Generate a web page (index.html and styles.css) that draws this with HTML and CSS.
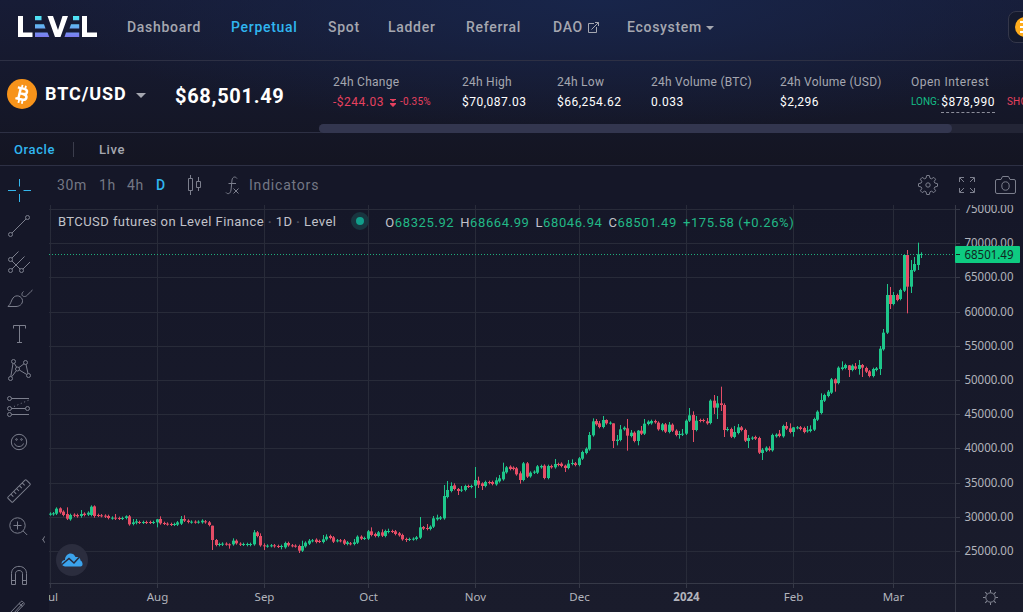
FILE: index.html
```html
<!DOCTYPE html>
<html lang="en">

<head>
  <meta charset="UTF-8">
  <meta name="viewport" content="width=device-width, initial-scale=1.0">
  <title>BTC/USD - Level Finance</title>
  <link rel="stylesheet" href="styles.css">
</head>

<body>
  <header class="top-nav">
    <svg class="logo" width="80" height="22" viewBox="0 0 80 22">
      <defs>
        <linearGradient id="bars" x1="0" y1="0" x2="0" y2="22" gradientUnits="userSpaceOnUse">
          <stop offset="0" stop-color="#4deaf5"/>
          <stop offset="1" stop-color="#7f72ee"/>
        </linearGradient>
      </defs>
      <path fill="#fff" d="M1 0h5v16.500h9.500V21H1zM30.500 0h5.500l5 14 4.500-14H51l-7.500 21h-5.500zM65 0h5v16.500h10V21H65z"/>
      <path fill="url(#bars)" d="M18 0h6.500v4.200H18zM18 8.200h9l1.500 4.300H18zM18 16.500h12.500l1.800 4.500H18zM56 0h6.200v4.200H56zM54 8.200h8.200v4.300h-9.700zM49 16.500h13.200V21H47.500z"/>
    </svg>
    <nav>
      <a class="n-dash">Dashboard</a>
      <a class="n-perp active">Perpetual</a>
      <a class="n-spot">Spot</a>
      <a class="n-ladder">Ladder</a>
      <a class="n-ref">Referral</a>
      <a class="n-dao">DAO
        <svg width="11" height="11" viewBox="0 0 11 11"><path d="M6 1.500H.5v9h8V5M3.500 7.500l7-7M7 .5h3.500V4"/></svg>
      </a>
      <a class="n-eco">Ecosystem <i class="caret"></i></a>
    </nav>
    <div class="chain">
      <svg width="20" height="20" viewBox="0 0 20 20"><circle cx="10" cy="10" r="10" fill="#ffac1c"/><path d="M5 5h10M5 10h10M5 15h10" stroke="#fff" stroke-width="2"/></svg>
    </div>
  </header>

  <section class="pair-bar">
    <div class="pair">
      <svg width="30" height="30" viewBox="0 0 30 30">
        <circle cx="15" cy="15" r="15" fill="#f7931a"/>
        <g transform="rotate(13 15 15)" fill="none" stroke="#fff" stroke-width="2.500">
          <path d="M9.500 9.500H16c4.500 0 4.500 5.200 0 5.200h-3.500M12.500 9.500v11M16 14.700c5.500 0 5.500 5.800 0 5.800H9.500"/>
          <path d="M13.500 6V9M17 6V9M13.500 21v3.500M17 21v3.500" stroke-width="1.800"/>
        </g>
      </svg>
      <span class="pair-name">BTC/USD</span>
      <i class="caret big"></i>
    </div>
    <div class="price">$68,501.49</div>
    <div class="stats-wrap">
      <div class="stats">
        <dl class="s-change"><dt>24h Change</dt><dd class="down">-$244.03
          <svg width="6" height="8" viewBox="0 0 6 8"><path fill="#e5415f" d="M0 0h6v1H5L3 3 1 1H0zM0 4h6v1L3 8 0 5z"/></svg>
          <small>-0.35%</small></dd></dl>
        <dl class="s-high"><dt>24h High</dt><dd>$70,087.03</dd></dl>
        <dl class="s-low"><dt>24h Low</dt><dd>$66,254.62</dd></dl>
        <dl class="s-vbtc"><dt>24h Volume (BTC)</dt><dd>0.033</dd></dl>
        <dl class="s-vusd"><dt>24h Volume (USD)</dt><dd>$2,296</dd></dl>
        <dl class="s-oi"><dt>Open Interest</dt><dd><small class="up">LONG:</small><u>$878,990</u><small class="down short">SHORT:</small></dd></dl>
      </div>
      <div class="scrollbar"><div class="thumb"></div></div>
    </div>
  </section>

  <div class="tabs">
    <span class="tab active">Oracle</span>
    <span class="tab">Live</span>
  </div>

  <main class="chart">
    <aside class="tools">
      <svg class="on" viewBox="0 0 28 28"><path d="M14.500 3v7.500M14.500 18v8M3 14.500h8M18.500 14.500H26"/></svg>
      <svg viewBox="0 0 28 28"><circle cx="5.500" cy="22.500" r="2"/><circle cx="22.500" cy="5.500" r="2"/><path d="M7 21 21 7"/></svg>
      <svg viewBox="0 0 28 28"><circle cx="5.500" cy="11.500" r="2"/><circle cx="5.500" cy="22.500" r="2"/><circle cx="16.500" cy="22.500" r="2"/><path d="M7 10l6.500-6.500M7 21 19.500 8.500M18 21l7-7M7 13l8 8"/></svg>
      <svg viewBox="0 0 28 28"><path d="M3 22.500c3-2.500 3-6 5-8.500 3-4 9-2 9.500 2.500.2 4-3.500 6-6.500 6zM18.500 7.500c-2.500 2-2 5 1 5 2.500 0 3-2 8-6.500"/></svg>
      <svg viewBox="0 0 28 28"><path d="M8.500 8.500v-3h12v3M14.500 5.500v17M12 22.500h5"/></svg>
      <svg viewBox="0 0 28 28"><circle cx="8.500" cy="5.500" r="2"/><circle cx="20.500" cy="6.500" r="2"/><circle cx="12.500" cy="13" r="2"/><circle cx="23.500" cy="19.500" r="2"/><circle cx="5.500" cy="22.500" r="2"/><path d="M5.800 20.500 8 7.500M9.300 7.300l2.400 4M14 11.500l5-3.700M21 8.500l2 9M14.300 14l7.500 4.500M11.200 14.800l-4.500 6"/></svg>
      <svg viewBox="0 0 28 28"><circle cx="4.500" cy="6.500" r="2"/><circle cx="4.500" cy="16.500" r="2"/><circle cx="22.500" cy="16.500" r="2"/><circle cx="4.500" cy="22.500" r="2"/><path d="M6.500 6.500H24M6.500 16.500h14M6.500 22.500H24"/><path d="M9 14.500 24 8" stroke-dasharray="1 2.700"/></svg>
      <svg viewBox="0 0 28 28"><circle cx="14" cy="14" r="7.700"/><circle cx="11.500" cy="11.500" r=".8"/><circle cx="16.500" cy="11.500" r=".8"/><path d="M9.500 15.500c1 4 8 4 9 0"/></svg>
      <svg class="gap-l" viewBox="0 0 28 28"><g transform="rotate(-45 14 15)"><rect x="1" y="11.500" width="26" height="7" rx="1"/><path d="M6 11.500V15M10 11.500V15M14 11.500V15M18 11.500V15M22 11.500V15"/></g></svg>
      <svg viewBox="0 0 28 28"><circle cx="12.500" cy="13.500" r="7.700"/><path d="M18.200 19l4 4M8.500 13.500h8M12.500 9.500v8"/></svg>
      <svg class="gap-xl" viewBox="0 0 28 28"><path d="M6.500 22.500v-11c0-9.500 15-9.500 15 0v11h-4v-11c0-4-7-4-7 0v11zM6.500 18.500h4M17.500 18.500h4"/></svg>
      <svg class="pull" viewBox="0 0 28 28"><path d="M5 19 16 7.500c1-1 4 1.500 3 3L8 22zM8 20 18 9M14 9.500l3.500 3M2 23l3-4"/></svg>
      <span class="collapse"></span>
    </aside>

    <div class="panel">
      <div class="chart-top">
        <span class="iv i30">30m</span>
        <span class="iv i1">1h</span>
        <span class="iv i4">4h</span>
        <span class="iv iD active">D</span>
        <svg class="ic-candle" width="15" height="20" viewBox="0 0 15 20"><path d="M3.500 0v3M3.500 16v4M1.500 3.500h4v12h-4zM11.500 2v4M11.500 13v3M9.500 6.500h4v6h-4z"/></svg>
        <svg class="ic-fx" width="15" height="19" viewBox="0 0 15 19"><path d="M12 2.500C10.500.2 7.500.5 7 4L6 14c-.5 4-3.500 4.500-5 2.500M3.500 7.500H11M8.500 12.500l5 5M13.500 12.500l-5 5"/></svg>
        <span class="iv ind">Indicators</span>
        <svg class="ic-gear" width="20" height="20" viewBox="0 0 20 20"><circle cx="10" cy="10" r="2.200"/><path d="M8 3.200 8.700.5h2.600l.7 2.700 1.500.6 2.300-1.400 1.800 1.800-1.400 2.300.6 1.500 2.700.7v2.600l-2.700.7-.6 1.500 1.400 2.300-1.800 1.800-2.300-1.400-1.500.6-.7 2.700H8.700L8 16.800l-1.500-.6-2.300 1.400-1.800-1.800 1.400-2.300-.6-1.500-2.700-.7V8.700L3.200 8l.6-1.500-1.400-2.300 1.800-1.800 2.300 1.400z"/></svg>
        <svg class="ic-full" width="16" height="16" viewBox="0 0 16 16"><path d="M.5 5V.5H5M11 .5h4.500V5M15.500 11v4.500H11M5 15.500H.5V11M1 1l4 4M15 1l-4 4M15 15l-4-4M1 15l4-4"/></svg>
        <svg class="ic-cam" width="21" height="18" viewBox="0 0 21 18"><path d="M2 3.500h4l1.500-3h6l1.500 3h4q1.500 0 1.500 1.500v11q0 1.500-1.500 1.500H2Q.5 17.500.5 16V5Q.5 3.500 2 3.500z"/><ellipse cx="10.500" cy="10" rx="3.700" ry="4.200"/></svg>
      </div>

      <div class="plot">
        <svg id="plot" width="974" height="407" viewBox="49 205 974 407"></svg>
        <div class="legend">
          <span class="sym">BTCUSD futures on Level Finance <b>·</b> 1D <b>·</b> Level</span>
          <span class="live"></span>
          <span class="ohlc"><span>O<em>68325.92</em></span><span>H<em>68664.99</em></span><span>L<em>68046.94</em></span><span>C<em>68501.49</em></span><em>+175.58 (+0.26%)</em></span>
        </div>
        <div class="tv">
          <svg width="22" height="14" viewBox="0 0 22 14"><path fill="#3ba3ec" d="M4 13.500C-1 13 0 7 4 7 4 0 12-2 14.500 4c4-.5 5 2 5 3.500 2.500 1 3 6 0 6z"/><path fill="none" stroke="#262a3c" stroke-width="1.500" d="M1 11.500 8 5.500l5 4.500 5-5.500"/></svg>
        </div>
      </div>
    </div>
  </main>
  <script src="chart.js"></script>
</body>

</html>
```
FILE: styles.css
```css
* {
  box-sizing: border-box;
}

body {
  margin: 0;
  width: 1023px;
  height: 612px;
  overflow: hidden;
  font-family: Roboto, "Liberation Sans", sans-serif;
  color: #a5a7b0;
  background: radial-gradient(ellipse 560px 130px at 600px 0, #18254a, rgba(24, 37, 74, 0)), linear-gradient(#171c36, #141522 165px);
}

svg {
  display: block;
  flex: none;
}

.top-nav {
  height: 61px;
  border-bottom: 1px solid #2d3044;
  display: flex;
  align-items: center;
  padding: 0 0 6px 17px;
}

.logo {
  margin-top: -1px;
}

nav {
  display: flex;
  margin-left: 30px;
  font-size: 14px;
  font-weight: 500;
  letter-spacing: 0.7px;
  white-space: nowrap;
}

nav a {
  display: flex;
  align-items: center;
}

nav a svg {
  margin-left: 5px;
  fill: none;
  stroke: #a5a7b0;
}

.n-dash { width: 104px; }
.n-perp { width: 97px; }
.n-spot { width: 60px; }
.n-ladder { width: 78px; }
.n-ref { width: 87px; }
.n-dao { width: 74px; }

.active {
  color: #30b6f0;
}

.caret {
  border: 4px solid transparent;
  border-top-color: #a5a7b0;
  border-bottom: 0;
  margin: 2px 0 0 4px;
}

.caret.big {
  border-width: 5px 5px 0;
  margin-left: 9px;
}

.chain {
  flex: none;
  width: 60px;
  height: 32px;
  margin-left: auto;
  margin-right: -45px;
  border: 1px solid #34374a;
  border-radius: 8px;
  background: #151a2d;
  padding: 5px 6px;
}

/* pair + 24h stats */
.pair-bar {
  height: 72px;
  border-bottom: 1px solid #2d3044;
  display: flex;
}

.pair {
  width: 175px;
  height: 66px;
  padding-left: 7px;
  display: flex;
  align-items: center;
}

.pair-name {
  margin: -2px 0 0 8px;
  font-size: 18px;
  font-weight: 700;
  letter-spacing: 0.9px;
  color: #fff;
}

.price {
  width: 144px;
  padding-top: 23px;
  font-size: 20px;
  font-weight: 700;
  letter-spacing: 0.7px;
  line-height: 24px;
  color: #fff;
}

.stats-wrap {
  width: 704px;
  height: 72px;
  overflow: hidden;
}

.stats {
  display: flex;
  height: 63px;
  padding: 14px 0 0 14px;
  white-space: nowrap;
}

.stats dl {
  flex: none;
  margin: 0;
  font-size: 12px;
  line-height: 14px;
  letter-spacing: 0.5px;
}

.stats dt {
  letter-spacing: 0.25px;
}

.stats .s-oi dt {
  letter-spacing: 0.5px;
}

.stats dd {
  margin: 5px 0 0;
  display: flex;
  align-items: center;
  height: 16px;
  color: #fff;
}

.stats dd svg {
  margin: 2px 4px 0 6px;
}

.stats small {
  font-size: 10px;
  letter-spacing: 0.2px;
}

.stats u {
  text-decoration: none;
  margin-left: 2px;
  height: 19px;
  line-height: 16px;
  margin-top: 3px;
  border-bottom: 1px dashed #8c8e9a;
}

.stats .up {
  color: #14bd86;
  letter-spacing: 0;
}

.stats .down { color: #e5415f; }
.stats .short { margin-left: 12px; }

.s-change { width: 129px; }
.s-high { width: 95px; }
.s-low { width: 94px; }
.s-vbtc { width: 129px; }
.s-vusd { width: 131px; }

.scrollbar {
  height: 9px;
  background: #232536;
  border-radius: 5px 0 0 5px;
}

.thumb {
  width: 633px;
  height: 9px;
  border-radius: 5px;
  background: #33364f;
}

.tabs {
  height: 33px;
  border-bottom: 1px solid #2d3044;
  display: flex;
  align-items: center;
  padding-left: 14px;
  font-size: 13px;
  font-weight: 500;
  letter-spacing: 0.6px;
}

.tab + .tab {
  margin-left: 18px;
  padding-left: 25px;
  border-left: 1px solid #3b3d4c;
}

/* chart */
.chart {
  display: flex;
  height: 446px;
  background: #151728;
}

.tools {
  width: 49px;
  padding: 6px 0 0 5px;
  position: relative;
}

.tools svg {
  width: 28px;
  height: 28px;
  margin: 4px 0 8px;
  fill: none;
  stroke: #7c7f8d;
}

.tools .on { stroke: #35b6ec; }
.tools .gap-l { margin-top: 20px; }
.tools .gap-xl { margin-top: 22px; }
.tools .pull { margin-top: -4px; }

.collapse {
  position: absolute;
  left: 42px;
  top: 371px;
  width: 5px;
  height: 5px;
  border-left: 1px solid #8b8d99;
  border-bottom: 1px solid #8b8d99;
  transform: scaleX(.6) rotate(45deg);
}

.panel {
  width: 974px;
}

.chart-top {
  height: 39px;
  display: flex;
  align-items: center;
  padding: 0 0 1px 8px;
}

.chart-top svg {
  fill: none;
  stroke: #7c7f8d;
}

.iv {
  font-size: 14px;
  letter-spacing: 0.6px;
  color: #747785;
}

.iv.active {
  color: #30b6f0;
  font-weight: 500;
}

.i30 { width: 42px; }
.i1 { width: 28px; }
.i4 { width: 29px; }
.iD { width: 31px; }
.ic-fx { margin-left: 23px; }
.ind { margin-left: 9px; letter-spacing: 0.8px; }
.ic-gear { margin-left: auto; }
.ic-full { margin-left: 21px; }
.ic-cam { margin: 0 7px 0 20px; }

.plot {
  position: relative;
  height: 407px;
  background: linear-gradient(#151728, #1a1c2c);
}

.legend {
  position: absolute;
  top: 7px;
  left: 9px;
  display: flex;
  align-items: center;
  height: 18px;
  font-size: 13px;
  letter-spacing: 0.43px;
  color: #c2c3ca;
  white-space: nowrap;
}

.legend b {
  color: #4b4e5d;
}

.live {
  width: 18px;
  height: 18px;
  margin: 0 16px 0 15px;
  border: 5px solid #18353f;
  border-radius: 50%;
  background: #119f8b;
}

.ohlc {
  display: flex;
  gap: 6px;
  padding-top: 2px;
  letter-spacing: 0.6px;
}

.ohlc em {
  font-style: normal;
  color: #22b886;
}

.tv {
  position: absolute;
  left: 7px;
  top: 339px;
  width: 32px;
  height: 32px;
  border-radius: 50%;
  background: #2b2d3e;
  display: flex;
  align-items: center;
  justify-content: center;
}

#plot text {
  font: 12.5px "Noto Sans", "Open Sans", sans-serif;
  fill: #b2b4bc;
}

#plot .month { text-anchor: middle; font-size: 11.5px; }
#plot .year { font-weight: 700; }
#plot .last { fill: #10261f; }
#plot .grid { stroke: #282b39; }
#plot .axis { stroke: #363947; }
#plot .rise { fill: #1ec68a; }
#plot .fall { fill: #e54d66; }
```
FILE: chart.js
```js
const plot = document.getElementById('plot');
const STEP = 3.459; // one day
const FIRST = 50;   // x of Jul 1

// [open, close, high, low] in thirds of a pixel below `top`; high and low are optional
const series = [
  { top: 490, bars: [
    [73,71],[73,70],[71,56],[55,67,52],[65,75],[72,86,52],[88,75],[74,77],[75,79],[78,72,60,83],[71,75],[74,68,64],
    [75,50,46],[49,78,46,83],[75,77],[76,78],[77,80],[78,84],[85,83],[83,86,72,90],[84,86],[86,84],[84,79,76],[79,103],
    [102,97,87],[98,94,87,103],[96,98],[98,96],[96,98],[96,98],[98,96],[97,88,87,112],[87,100,79],[99,101],[101,103],
    [102,104],[104,102],[104,97],[101,87,78],[87,92,76],[92,96],[97,95],[95,97],[97,95],[97,92,88],[94,97],[97,105],
    [107,150,107,180],[150,165,147],[165,162],[164,161],[161,163],[163,165,160,176],[163,152,145],[152,160],[161,164],
    [164,162],[165,162],[165,162],[163,127,120],[127,138],[138,166,130],[166,168,160,180],[169,167]
  ] },
  { top: 420, bars: [
    [378,376],[376,379],[378,380],[380,378,374,388],[382,369],[369,376],[376,378],[377,379],[378,392,374,399],
    [392,378,362],[379,368],[371,362,357],[363,361],[359,366],[363,365],[366,358,345],[358,350,343],[348,354],[352,365],
    [363,361],[361,363],[361,371],[372,367],[370,372],[372,367,357],[368,350],[350,356],[356,354],[356,334],
    [334,345,322],[342,348],[348,337],[337,347,328],[348,333],[336,333,326],[333,335],[334,342],[340,346],[345,358],
    [357,360,353,366],[359,357],[358,356],[357,352],[353,322,291],[321,326,318],[324,327,312],[327,320],[320,295,288],
    [298,293,284],[296,292],[295,228,195],[231,210,183],[213,198,187],[196,207,190],[207,213,204,225],[212,209,198],
    [210,198],[198,200],[201,198],[197,180,141,234],[182,194,170,204],[190,198,187,210],[198,186],[186,189],[186,192],
    [193,181,172],[184,175,165]
  ] },
  { top: 380, bars: [
    [298,275,248],[277,262],[260,267],[263,267],[265,283],[280,300,274,311],[300,250],[250,290],[289,278],[278,275],
    [278,259],[262,258],[257,294],[294,258],[258,262],[262,252,237],[252,255],[251,258],[257,264,254,276],[264,251,240],
    [252,249,238],[250,255],[255,235],[236,216],[219,206],[208,165,156],[166,124,115],[123,133,117],[130,141,123],
    [141,120,108],[120,130,118],[130,128],[130,183,130,204],[183,179,165,196],[180,148,135],[148,143],
    [145,167,117,212],[168,158,150],[158,183],[183,152,150,196],[152,161,138],[161,131,117],[132,125],[130,123],
    [123,127],[128,148],[150,133],[133,155],[156,134,126],[134,152],[152,165],[164,162,153,176],[164,161,147],
    [161,122],[122,106,84],[105,150,94,186],[150,122,108],[120,123],[120,123],[124,130,114],[129,62,58],
    [62,83,45,102],[83,70,48,117],[70,75,20,93]
  ] },
  { top: 340, bars: [
    [195,270,190,291],[270,267,261],[267,290],[291,276,258],[279,262,252],[262,270],[270,302],[303,294,285,324],
    [296,293],[291,296],[294,338],[339,329,324,360],[332,323],[325,330,319],[331,285],[289,284],[281,288,270],[289,258],
    [258,266,246],[265,276,250],[276,262,261,290],[264,262],[262,267],[264,276],[274,271,258],[273,268,256],[269,237],
    [239,215],[219,180,160],[182,165],[168,155,150],[158,118,114],[118,130,115,155],[129,83],[87,82,64],[84,75],
    [76,90,75,111],[90,77],[79,86,69],[87,75,60,104],[75,83,72,111],[84,95],[94,108],[108,87],[90,85]
  ] },
  { top: 200, bars: [
    [507,446,438,525],[448,398,387],[398,285,252],[285,312,261,327],[312,285,276],[285,300],[297,270],[272,165,165],
    [165,260,150,340],[260,210,180,279],[212,192,171],[195,163,128,210],[165,162,157,174]
  ] }
];

const priceY = p => 209.4 + (75000 - p) * 0.00684;
const crisp = n => Math.round(n - 0.5) + 0.5;
const months = [['ul', 0], ['Aug', 31], ['Sep', 62], ['Oct', 92], ['Nov', 123], ['Dec', 153], ['2024', 184], ['Feb', 215], ['Mar', 244]];
let out = '';

for (let p = 75000; p >= 25000; p -= 5000) {
  const y = crisp(priceY(p));
  out += `<path class="grid" d="M49 ${y}H955"/><path class="axis" d="M956 ${y}h4"/>`;
  out += `<text x="964.500" y="${y + 3.5}" textLength="49" lengthAdjust="spacingAndGlyphs">${p}.00</text>`;
}

for (const [name, day] of months) {
  const x = crisp(FIRST + day * STEP);
  out += `<path class="grid" d="M${x} 205V583"/><path class="axis" d="M${x} 584v4"/>`;
  out += `<text class="month${name === '2024' ? ' year' : ''}" x="${name === 'ul' ? 53 : x}" y="601">${name}</text>`;
}
out += '<path class="axis" d="M955.500 205V612M49 583.500H1023"/>';

let i = 0;
for (const { top, bars } of series) {
  for (const [open, close, high, low] of bars) {
    const up = Math.min(open, close), down = Math.max(open, close);
    const h = top + Math.min(up, high || up - 4) / 3;
    const l = top + Math.max(down, low || down + 4) / 3;
    const x = Math.round(FIRST + i * STEP - 0.5);
    const bodyTop = top + up / 3;
    const bodyHeight = Math.max((down - up) / 3, 1);
    out += `<g class="${close < open ? 'rise' : 'fall'}"><rect x="${x}" y="${h}" width="1" height="${l - h}"/>`;
    out += `<rect x="${x - 1}" y="${bodyTop}" width="3" height="${bodyHeight}"/></g>`;
    i++;
  }
}

// last price
out += '<path d="M49 254.500H955" stroke="#1fae7c" stroke-dasharray="1 2"/>';
out += '<rect x="955" y="246" width="65" height="17" rx="1" fill="#0ecb81"/><path d="M956 254.500h4" stroke="#10261f"/>';
out += '<text class="last" x="964.500" y="259" textLength="49" lengthAdjust="spacingAndGlyphs">68501.49</text>';

// time axis settings
out += '<g fill="none" stroke="#858895"><circle cx="990.500" cy="597.500" r="4.700"/>';
for (let a = 0; a < 360; a += 45) {
  out += `<path d="M990.500 592.500v-2.500" transform="rotate(${a} 990.500 597.500)"/>`;
}
out += '</g>';

plot.innerHTML = out;
```
